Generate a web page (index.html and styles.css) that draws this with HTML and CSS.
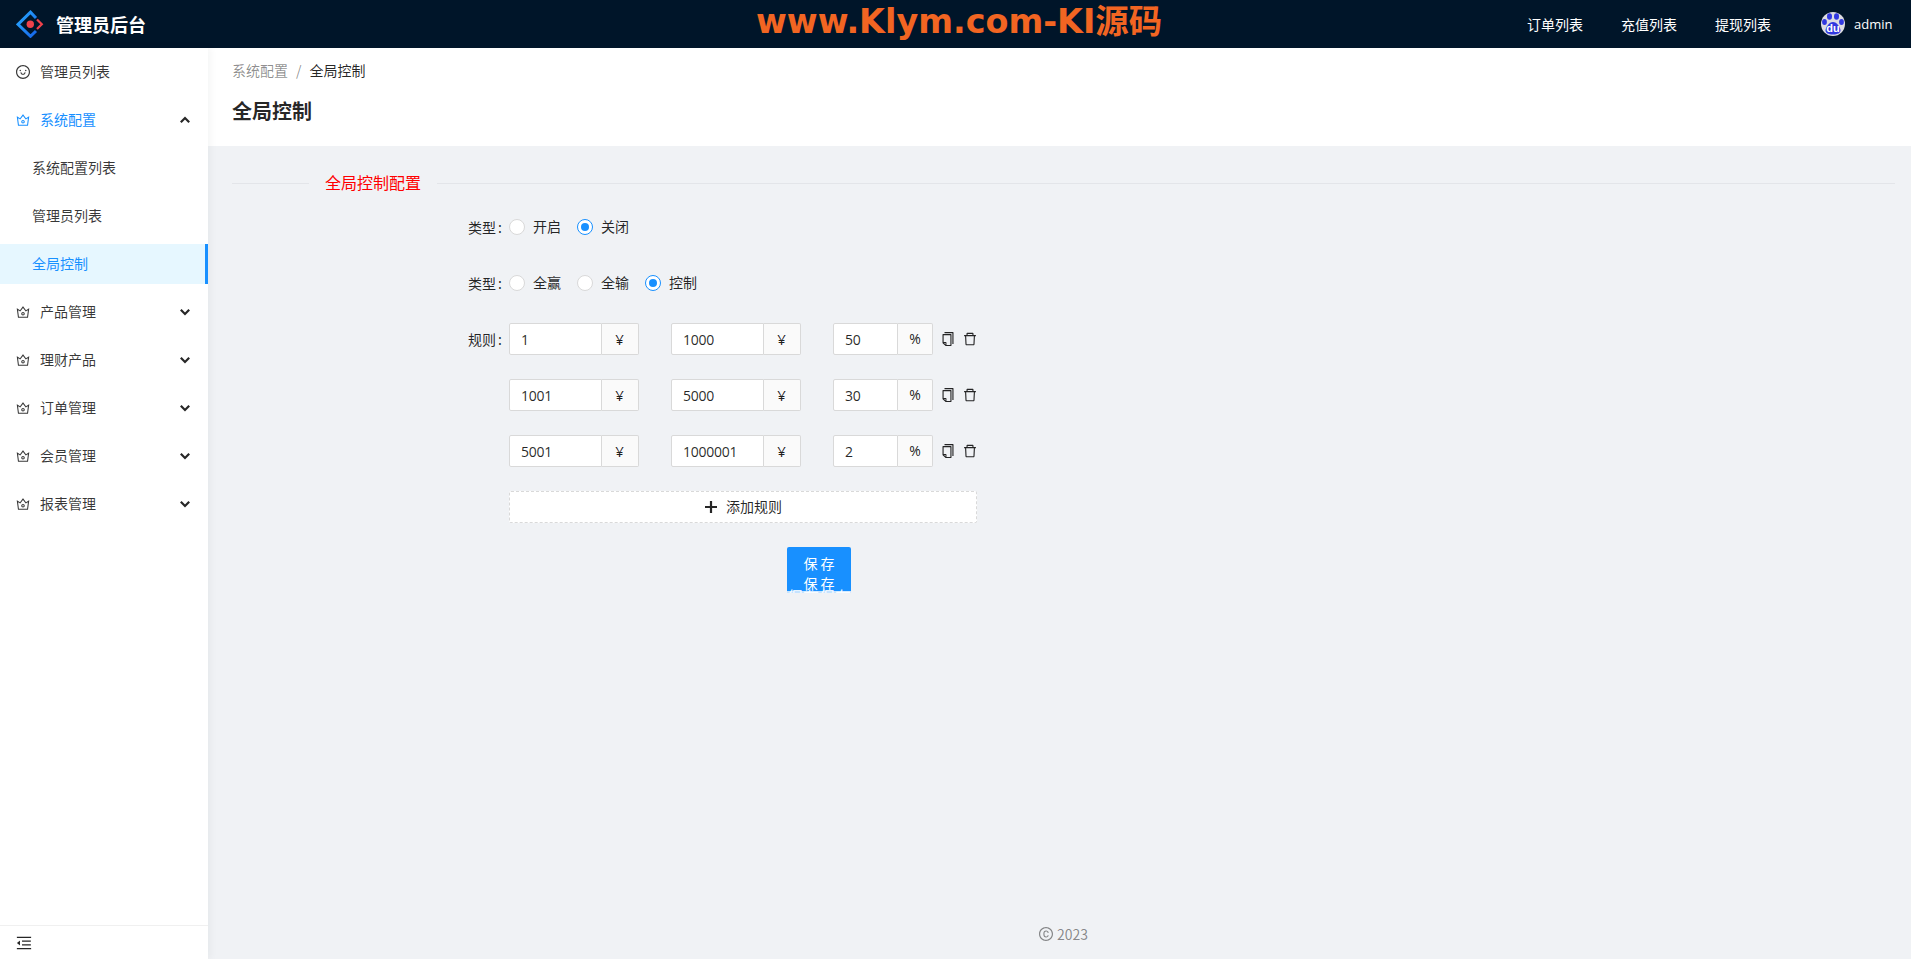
FILE: index.html
```html
<!DOCTYPE html>
<html lang="zh-CN">
<head>
<meta charset="utf-8">
<title>全局控制</title>
<link rel="stylesheet" href="styles.css">
</head>
<body>
<svg class="sprite" xmlns="http://www.w3.org/2000/svg">
  <symbol id="i-smile" viewBox="64 64 896 896"><path d="M288 421a48 48 0 1096 0 48 48 0 10-96 0zm352 0a48 48 0 1096 0 48 48 0 10-96 0zM512 64C264.6 64 64 264.6 64 512s200.6 448 448 448 448-200.6 448-448S759.4 64 512 64zm263 711c-34.2 34.2-74 61-118.3 79.8C611 874.2 562.3 884 512 884c-50.3 0-99-9.8-144.8-29.2A370.4 370.4 0 01248.9 775c-34.2-34.2-61-74-79.8-118.3C149.8 611 140 562.3 140 512s9.8-99 29.2-144.8A370.4 370.4 0 01249 248.9c34.2-34.2 74-61 118.3-79.8C413 149.8 461.7 140 512 140c50.3 0 99 9.8 144.8 29.2A370.4 370.4 0 01775.1 249c34.2 34.2 61 74 79.8 118.3C874.2 413 884 461.7 884 512s-9.8 99-29.2 144.8A368.89 368.89 0 01775 775zM664 533h-48.1c-4.2 0-7.8 3.2-8.1 7.4C604 589.9 562.5 629 512 629s-92.1-39.1-95.8-88.6c-.3-4.2-3.9-7.4-8.1-7.4H360a8 8 0 00-8 8.4c4.4 84.3 74.5 151.6 160 151.6s155.6-67.3 160-151.6a8 8 0 00-8-8.4z"/></symbol>
  <symbol id="i-crown" viewBox="64 64 896 896"><path d="M899.6 276.5L705 396.4 518.4 147.5a8.06 8.06 0 00-12.9 0L319 396.4 124.3 276.5c-5.7-3.5-13.1 1.2-12.2 7.9L188.5 865c1.1 7.9 7.9 14 16 14h615.1c8 0 14.9-6 15.9-14l76.4-580.6c.8-6.7-6.5-11.4-12.3-7.9zm-126 534.1H250.3l-53.8-409.4 139.8 86.1L512 252.9l175.7 234.4 139.8-86.1-53.9 409.4zM512 509c-62.1 0-112.6 50.5-112.6 112.6S449.9 734.2 512 734.2s112.6-50.5 112.6-112.6S574.1 509 512 509zm0 160.9c-26.6 0-48.2-21.6-48.2-48.3 0-26.6 21.6-48.3 48.2-48.3s48.2 21.6 48.2 48.3c0 26.6-21.6 48.3-48.2 48.3z"/></symbol>
  <symbol id="i-copy" viewBox="64 64 896 896"><path d="M832 64H296c-4.4 0-8 3.6-8 8v56c0 4.4 3.6 8 8 8h496v688c0 4.4 3.6 8 8 8h56c4.4 0 8-3.6 8-8V96c0-17.7-14.3-32-32-32zM704 192H192c-17.7 0-32 14.3-32 32v530.7c0 8.5 3.4 16.6 9.4 22.6l173.3 173.3c2.2 2.2 4.7 4 7.4 5.5v1.9h4.2c3.5 1.3 7.2 2 11 2H704c17.7 0 32-14.3 32-32V224c0-17.7-14.3-32-32-32zM350 856.2L263.9 770H350v86.2zM664 888H414V746c0-22.1-17.9-40-40-40H232V264h432v624z"/></symbol>
  <symbol id="i-delete" viewBox="64 64 896 896"><path d="M360 184h-8c4.4 0 8-3.6 8-8v8h304v-8c0 4.4 3.6 8 8 8h-8v72h72v-80c0-35.3-28.7-64-64-64H352c-35.3 0-64 28.7-64 64v80h72v-72zm504 72H160c-17.7 0-32 14.3-32 32v32c0 4.4 3.6 8 8 8h60.4l24.7 523c1.6 34.1 29.8 61 63.9 61h454c34.2 0 62.3-26.8 63.9-61l24.7-523H888c4.4 0 8-3.6 8-8v-32c0-17.7-14.3-32-32-32zM731.3 840H292.7l-24.2-512h487l-24.2 512z"/></symbol>
  <symbol id="i-plus" viewBox="0 0 14 14"><path d="M1 7h12M7 1v12" fill="none" stroke="currentColor" stroke-width="2.2"/></symbol>
  <symbol id="i-outdent" viewBox="64 64 896 896"><path d="M408 442h480c4.4 0 8-3.6 8-8v-56c0-4.4-3.6-8-8-8H408c-4.4 0-8 3.6-8 8v56c0 4.4 3.6 8 8 8zm-8 204c0 4.4 3.6 8 8 8h480c4.4 0 8-3.6 8-8v-56c0-4.4-3.6-8-8-8H408c-4.4 0-8 3.6-8 8v56zm504-486H120c-4.4 0-8 3.6-8 8v56c0 4.4 3.6 8 8 8h784c4.4 0 8-3.6 8-8v-56c0-4.4-3.6-8-8-8zm0 632H120c-4.4 0-8 3.6-8 8v56c0 4.4 3.6 8 8 8h784c4.4 0 8-3.6 8-8v-56c0-4.4-3.6-8-8-8zM115.4 518.9L271.7 642c5.8 4.6 14.4.5 14.4-6.9V388.9c0-7.4-8.5-11.5-14.4-6.9L115.4 505.1a8.74 8.74 0 000 13.8z"/></symbol>
  <symbol id="i-copyright" viewBox="64 64 896 896"><path d="M512 64C264.6 64 64 264.6 64 512s200.6 448 448 448 448-200.6 448-448S759.4 64 512 64zm0 820c-205.4 0-372-166.6-372-372s166.6-372 372-372 372 166.6 372 372-166.6 372-372 372zm5.6-532.7c53 0 89 33.8 93 83.4.3 4.2 3.8 7.4 8 7.4h56.7c2.6 0 4.7-2.1 4.7-4.7 0-86.7-68.4-147.4-162.7-147.4C407.4 290 344 364.2 344 486v52.3C344 659.8 407.4 734 517.3 734c94 0 162.7-58.8 162.7-144 0-2.6-2.1-4.7-4.7-4.7h-56.8c-4.2 0-7.6 3.2-8 7.3-4.2 46.1-40.1 77.8-93 77.8-65.3 0-102.1-47.9-102.1-134.8v-52.6c.1-87.8 37-135.6 102.2-135.6z"/></symbol>
  <symbol id="i-up" viewBox="0 0 10 10"><path d="M.8 7.200L5 3l4.200 4.200" fill="none" stroke="currentColor" stroke-width="2.200"/></symbol>
  <symbol id="i-down" viewBox="0 0 10 10"><path d="M.8 2.800L5 7l4.200-4.200" fill="none" stroke="currentColor" stroke-width="2.200"/></symbol>
</svg>

<header class="topbar">
  <div class="brand">
    <svg class="logo" viewBox="0 0 28 28">
      <defs><linearGradient id="logo-blue" x1="0" y1="0" x2="1" y2="1"><stop offset="0" stop-color="#29a9ff"/><stop offset="1" stop-color="#1565e8"/></linearGradient></defs>
      <path d="M20 8L14.500 2.200 2 14.300 14.500 26.300 20 21" fill="none" stroke="url(#logo-blue)" stroke-width="3"/>
      <path d="M21 9.500L25.800 14.300 21 19" fill="none" stroke="#f0424b" stroke-width="2.200"/>
      <circle cx="14.300" cy="14.300" r="3.700" fill="#f0424b"/>
    </svg>
    <span class="brand-name">管理员后台</span>
  </div>
  <div class="watermark">www.Klym.com-KI源码</div>
  <nav class="topnav">
    <a class="topnav-link">订单列表</a>
    <a class="topnav-link">充值列表</a>
    <a class="topnav-link">提现列表</a>
  </nav>
  <div class="user">
    <span class="avatar">
      <svg class="paw" viewBox="0 0 24 24">
        <circle cx="12" cy="12" r="12" fill="#dcdce2"/>
        <ellipse cx="3.500" cy="10" rx="2.400" ry="3" fill="#3038e0"/>
        <ellipse cx="8.500" cy="4.500" rx="2.500" ry="3.200" fill="#3038e0"/>
        <ellipse cx="15.500" cy="4.500" rx="2.500" ry="3.200" fill="#3038e0"/>
        <ellipse cx="20.500" cy="10" rx="2.400" ry="3" fill="#3038e0"/>
        <path d="M12 10c-4 0-7 5-7.500 8-.3 3 3 4.500 7.500 4.500s7.800-1.500 7.500-4.500C19 15 16 10 12 10z" fill="#3038e0"/>
      </svg>
      <span class="avatar-du">du</span>
    </span>
    <span class="user-name">admin</span>
  </div>
</header>

<div class="shell">
  <aside class="sider">
    <ul class="menu">
      <li class="menu-item"><svg class="icon menu-icon"><use href="#i-smile"/></svg><span class="txt">管理员列表</span></li>
      <li class="menu-item is-open"><svg class="icon menu-icon"><use href="#i-crown"/></svg><span class="txt">系统配置</span><svg class="chev"><use href="#i-up"/></svg></li>
      <li class="menu-sub"><span class="txt">系统配置列表</span></li>
      <li class="menu-sub"><span class="txt">管理员列表</span></li>
      <li class="menu-sub is-active"><span class="txt">全局控制</span></li>
      <li class="menu-item"><svg class="icon menu-icon"><use href="#i-crown"/></svg><span class="txt">产品管理</span><svg class="chev"><use href="#i-down"/></svg></li>
      <li class="menu-item"><svg class="icon menu-icon"><use href="#i-crown"/></svg><span class="txt">理财产品</span><svg class="chev"><use href="#i-down"/></svg></li>
      <li class="menu-item"><svg class="icon menu-icon"><use href="#i-crown"/></svg><span class="txt">订单管理</span><svg class="chev"><use href="#i-down"/></svg></li>
      <li class="menu-item"><svg class="icon menu-icon"><use href="#i-crown"/></svg><span class="txt">会员管理</span><svg class="chev"><use href="#i-down"/></svg></li>
      <li class="menu-item"><svg class="icon menu-icon"><use href="#i-crown"/></svg><span class="txt">报表管理</span><svg class="chev"><use href="#i-down"/></svg></li>
    </ul>
    <div class="collapse"><svg class="icon collapse-icon"><use href="#i-outdent"/></svg></div>
  </aside>

  <main class="main">
    <section class="page-head">
      <div class="crumbs"><span class="crumb-link txt">系统配置</span><span class="crumb-sep txt">/</span><span class="crumb-now txt">全局控制</span></div>
      <h1 class="page-title">全局控制</h1>
    </section>

    <section class="content">
      <div class="divider"><span class="divider-line divider-left"></span><span class="divider-text txt">全局控制配置</span><span class="divider-line divider-right"></span></div>

      <div class="form-row">
        <label class="form-label"><span class="txt">类型<span class="colon">:</span></span></label>
        <div class="radios">
          <span class="radio"><i class="radio-dot"></i><span class="txt">开启</span></span>
          <span class="radio"><i class="radio-dot is-on"></i><span class="txt">关闭</span></span>
        </div>
      </div>
      <div class="form-row">
        <label class="form-label"><span class="txt">类型<span class="colon">:</span></span></label>
        <div class="radios">
          <span class="radio"><i class="radio-dot"></i><span class="txt">全赢</span></span>
          <span class="radio"><i class="radio-dot"></i><span class="txt">全输</span></span>
          <span class="radio"><i class="radio-dot is-on"></i><span class="txt">控制</span></span>
        </div>
      </div>

      <div class="form-row">
        <label class="form-label"><span class="txt">规则<span class="colon">:</span></span></label>
        <div class="rule">
          <span class="group group-a"><input class="field" value="1"><span class="addon">¥</span></span>
          <span class="group group-a"><input class="field" value="1000"><span class="addon">¥</span></span>
          <span class="group group-b"><input class="field" value="50"><span class="addon">%</span></span>
          <svg class="icon action action-copy"><use href="#i-copy"/></svg>
          <svg class="icon action"><use href="#i-delete"/></svg>
        </div>
      </div>
      <div class="form-row">
        <label class="form-label"></label>
        <div class="rule">
          <span class="group group-a"><input class="field" value="1001"><span class="addon">¥</span></span>
          <span class="group group-a"><input class="field" value="5000"><span class="addon">¥</span></span>
          <span class="group group-b"><input class="field" value="30"><span class="addon">%</span></span>
          <svg class="icon action action-copy"><use href="#i-copy"/></svg>
          <svg class="icon action"><use href="#i-delete"/></svg>
        </div>
      </div>
      <div class="form-row">
        <label class="form-label"></label>
        <div class="rule">
          <span class="group group-a"><input class="field" value="5001"><span class="addon">¥</span></span>
          <span class="group group-a"><input class="field" value="1000001"><span class="addon">¥</span></span>
          <span class="group group-b"><input class="field" value="2"><span class="addon">%</span></span>
          <svg class="icon action action-copy"><use href="#i-copy"/></svg>
          <svg class="icon action"><use href="#i-delete"/></svg>
        </div>
      </div>
      <div class="form-row">
        <label class="form-label"></label>
        <button class="add-btn" type="button"><svg class="icon add-icon"><use href="#i-plus"/></svg><span class="txt">添加规则</span></button>
      </div>

      <div class="save-row">
        <button class="save-btn" type="button"><span>保 存</span><span>保 存</span><span class="save-ghost">保存保存</span></button>
      </div>

      <footer class="footer"><svg class="icon copy-mark"><use href="#i-copyright"/></svg>2023</footer>
    </section>
  </main>
</div>
</body>
</html>
```
FILE: styles.css
```css
* { box-sizing: border-box; }
html, body { height: 100%; }
body {
  margin: 0;
  font-family: "Noto Sans CJK SC", "Open Sans", sans-serif;
  font-size: 14px;
  line-height: 22px;
  color: rgba(0, 0, 0, .85);
  background: #f0f2f5;
  display: flex;
  flex-direction: column;
  overflow: hidden;
}
.sprite { display: none; }
.icon { width: 14px; height: 14px; fill: currentColor; flex: none; display: block; }
.txt { margin-bottom: 2px; }

.topbar {
  height: 48px;
  flex: none;
  background: #001529;
  color: #fff;
  display: flex;
  align-items: center;
  padding: 0 19px 0 16px;
}
.brand { display: flex; align-items: center; width: 740px; flex: none; }
.logo { width: 28px; height: 28px; margin-right: 12px; }
.brand-name { font-size: 18px; font-weight: 700; }
.watermark {
  font-family: "DejaVu Sans", "Noto Sans CJK SC", sans-serif;
  font-weight: 700;
  font-size: 33.4px;
  line-height: 44px;
  margin-bottom: 4px;
  color: #f26522;
  white-space: nowrap;
  width: 404px;
  flex: none;
}
.topnav { display: flex; gap: 38px; margin-left: 367px; }
.topnav-link { width: 56px; white-space: nowrap; }
.user { display: flex; align-items: center; margin-left: 50px; }
.avatar { position: relative; width: 24px; height: 24px; margin-right: 9px; display: block; }
.paw { width: 24px; height: 24px; display: block; }
.avatar-du {
  position: absolute; left: 0; right: 0; top: 9px;
  text-align: center; font: 700 11px/14px "Liberation Sans", sans-serif; color: #fff;
}
.user-name { font-family: "Open Sans", sans-serif; font-size: 13px; }

.shell { flex: 1; display: flex; min-height: 0; }
.sider {
  width: 208px;
  flex: none;
  background: #fff;
  box-shadow: 2px 0 8px rgba(29, 35, 41, .05);
  display: flex;
  flex-direction: column;
  position: relative;
}
.menu { list-style: none; margin: 4px 0 0; padding: 0; flex: 1; color: rgba(0, 0, 0, .78); }
.menu-item, .menu-sub {
  height: 40px;
  margin-bottom: 8px;
  display: flex;
  align-items: center;
}
.menu-item { padding: 0 18px 0 16px; }
.menu-icon { margin-right: 10px; }
.menu-sub { padding-left: 32px; }
.chev { width: 10px; height: 10px; margin-left: auto; color: rgba(0, 0, 0, .85); }
.is-open { color: #1890ff; }
.is-active { background: #e6f7ff; color: #1890ff; border-right: 3px solid #1890ff; }
.collapse {
  height: 34px;
  flex: none;
  border-top: 1px solid #f0f0f0;
  padding: 9px 0 0 16px;
}
.collapse-icon { width: 16px; height: 16px; }

.main { flex: 1; min-width: 0; display: flex; flex-direction: column; }
.page-head { background: #fff; height: 98px; flex: none; padding: 12px 24px 0; }
.crumbs { display: flex; align-items: center; height: 22px; }
.crumb-link { color: rgba(0, 0, 0, .45); }
.crumb-sep { color: rgba(0, 0, 0, .45); margin: 0 8px 2px; }
.page-title { margin: 13px 0 0; font-size: 20px; line-height: 32px; font-weight: 700; }

.content { flex: 1; min-height: 0; padding: 26px 16px 0 24px; display: flex; flex-direction: column; }
.divider { display: flex; align-items: center; height: 22px; margin-bottom: 17px; color: #f00; }
.divider-line { height: 1px; background: #e3e5e9; display: block; }
.divider-left { width: 77px; }
.divider-right { flex: 1; }
.divider-text { padding: 0 16px; font-size: 16px; }

.form-row { display: flex; align-items: center; height: 32px; margin-bottom: 24px; }
.form-label { width: 277px; flex: none; padding-right: 7px; text-align: right; white-space: nowrap; }
.colon { margin-left: 2px; }
.radios { display: flex; gap: 16px; }
.radio { display: flex; align-items: center; }
.radio-dot {
  width: 16px; height: 16px; border-radius: 50%;
  border: 1px solid #d9d9d9; background: #fff; margin-right: 8px; display: flex;
  align-items: center; justify-content: center;
}
.radio-dot.is-on { border-color: #1890ff; }
.radio-dot.is-on::after { content: ""; width: 8px; height: 8px; border-radius: 50%; background: #1890ff; }

.rule { display: flex; align-items: center; }
.group { display: flex; height: 32px; margin-right: 32.5px; font-family: "Open Sans", sans-serif; }
.group-a { width: 129.5px; }
.group-b { width: 100px; margin-right: 8px; }
.field {
  flex: 1; min-width: 0;
  border: 1px solid #d9d9d9;
  border-radius: 2px 0 0 2px;
  padding: 0 11px; font: 14px "Open Sans", sans-serif; letter-spacing: -.25px; color: rgba(0, 0, 0, .85); background: #fff; outline: 0;
}
.addon {
  width: 37px; flex: none;
  border: 1px solid #d9d9d9; border-left: 0; border-radius: 0 2px 2px 0;
  background: #fafafa; text-align: center; line-height: 30px; font-size: 15px;
  color: rgba(0, 0, 0, .9);
}
.group-b .addon { width: 35px; font-size: 14px; }
.action { width: 14px; height: 14px; }
.action-copy { margin-right: 7.5px; }

.add-btn {
  width: 468px; height: 32px;
  border: 1px dashed #d9d9d9; border-radius: 2px; background: #fff;
  font: inherit; color: rgba(0, 0, 0, .85);
  display: flex; align-items: center; justify-content: center; padding: 0;
}
.add-icon { margin-right: 8px; }

.save-row { display: flex; padding-left: 555px; }
.save-btn {
  width: 64px; height: 46px;
  background: #1890ff; border: 0; border-radius: 2px 2px 0 0; color: #fff;
  font: inherit; line-height: 20px; padding: 6px 0 0;
  display: block; overflow: hidden; position: relative;
}
.save-btn span { display: block; white-space: nowrap; }
.save-btn::after {
  content: ""; position: absolute; left: 0; right: 0; bottom: 0; height: 2px;
  background: rgba(255, 255, 255, .75);
}
.save-btn .save-ghost {
  position: absolute; left: 0; right: 0; top: 39px; font-size: 16px; line-height: 20px;
  text-align: center; color: #e6f4ff;
}

.footer {
  margin-top: auto;
  height: 50px;
  display: flex; align-items: center; justify-content: center;
  color: rgba(0, 0, 0, .45);
}
.copy-mark { margin-right: 4px; }
```
